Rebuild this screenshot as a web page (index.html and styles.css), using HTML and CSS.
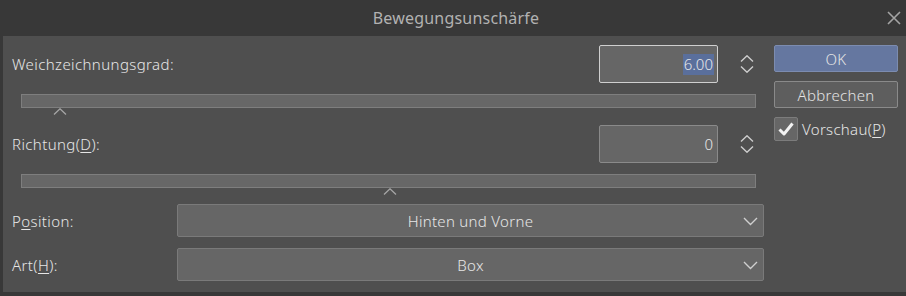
FILE: index.html
```html
<!DOCTYPE html>
<html lang="de">
<head>
<meta charset="utf-8">
<title>Bewegungsunschärfe</title>
<link rel="stylesheet" href="styles.css">
</head>
<body>
<div class="dialog">
  <header class="titlebar">
    <span class="title">Bewegungsunschärfe</span>
    <svg class="close" width="14" height="14" viewBox="0 0 14 14"><path d="M1 1 L13 13 M13 1 L1 13" stroke="#a4a4a4" stroke-width="1.6" fill="none"/></svg>
  </header>
  <main class="panel">
    <section class="form">
      <div class="row">
        <span class="label">Weichzeichnungsgrad:</span>
        <div class="numbox focused"><span class="sel">6.00</span></div>
        <div class="spin">
          <svg width="14" height="18" viewBox="0 0 14 18"><path d="M1 6.5 L7 0.8 L13 6.5 M1 11.5 L7 17.2 L13 11.5" stroke="#cfcfcf" stroke-width="1.4" fill="none"/></svg>
        </div>
      </div>
      <div class="slider"><span class="caret" style="left:31px"><svg width="14" height="7" viewBox="0 0 14 7"><path d="M1 6.5 L7 0.8 L13 6.5" stroke="#a6a6a6" stroke-width="1.3" fill="none"/></svg></span></div>
      <div class="row row2">
        <span class="label">Richtung(<u>D</u>):</span>
        <div class="numbox"><span>0</span></div>
        <div class="spin">
          <svg width="14" height="18" viewBox="0 0 14 18"><path d="M1 6.5 L7 0.8 L13 6.5 M1 11.5 L7 17.2 L13 11.5" stroke="#cfcfcf" stroke-width="1.4" fill="none"/></svg>
        </div>
      </div>
      <div class="slider"><span class="caret" style="left:361px"><svg width="14" height="7" viewBox="0 0 14 7"><path d="M1 6.5 L7 0.8 L13 6.5" stroke="#a6a6a6" stroke-width="1.3" fill="none"/></svg></span></div>
      <div class="selrow first">
        <span class="label">P<u>o</u>sition:</span>
        <div class="select"><span>Hinten und Vorne</span>
          <svg class="chev" width="15" height="9" viewBox="0 0 15 9"><path d="M1 1 L7.5 7.5 L14 1" stroke="#cfcfcf" stroke-width="1.4" fill="none"/></svg>
        </div>
      </div>
      <div class="selrow">
        <span class="label">Art(<u>H</u>):</span>
        <div class="select"><span>Box</span>
          <svg class="chev" width="15" height="9" viewBox="0 0 15 9"><path d="M1 1 L7.5 7.5 L14 1" stroke="#cfcfcf" stroke-width="1.4" fill="none"/></svg>
        </div>
      </div>
    </section>
    <aside class="side">
      <button class="btn ok">OK</button>
      <button class="btn">Abbrechen</button>
      <label class="check">
        <span class="box"><svg width="18" height="16" viewBox="0 0 18 16"><path d="M2.5 8.5 L7 13 L15.5 2.5" stroke="#f2f2f2" stroke-width="3" fill="none" stroke-linejoin="round"/></svg></span>
        <span>Vorschau(<u>P</u>)</span>
      </label>
    </aside>
  </main>
  <div class="bottom"></div>
</div>
</body>
</html>
```
FILE: styles.css
```css
* { box-sizing: border-box; }
html, body { margin: 0; padding: 0; }
body {
  background: #383838;
  font-family: "Noto Sans", "Noto Sans CJK JP", sans-serif;
  font-weight: 300;
  color: #e4e4e4;
  width: 906px;
  height: 296px;
  overflow: hidden;
}
.dialog { display: flex; flex-direction: column; height: 296px; }
.titlebar {
  height: 36px;
  display: flex;
  align-items: center;
  justify-content: center;
  position: relative;
  background: #383838;
}
.title { font-size: 16px; font-weight: 400; color: #b2b2b2; letter-spacing: 0.2px; margin-left: 6px; }
.close { position: absolute; right: 5px; top: 11px; }
.panel {
  height: 256px;
  margin-left: 3px;
  background: #4f4f4f;
  display: flex;
  padding: 9px 0 0 9px;
}
.form { width: 752px; display: flex; flex-direction: column; }
.label { font-size: 15px; color: #e6e6e6; letter-spacing: 0.4px; }
.label u, .check u { text-underline-offset: 2px; }
.row { height: 38px; display: flex; align-items: center; }
.row .label { flex: 1; }
.row2 { margin-top: 17px; }
.numbox {
  width: 119px;
  height: 38px;
  background: #666666;
  border: 1px solid #8a8a8a;
  border-radius: 2px;
  display: flex;
  align-items: center;
  justify-content: flex-end;
  padding-right: 3px;
  font-size: 15px;
  color: #e8e8e8;
}
.numbox.focused { border-color: #cfcfcf; }
.numbox span { padding: 2px 1px; line-height: 17px; }
.numbox .sel { background: #5a6f9c; }
.spin { width: 46px; display: flex; justify-content: flex-end; padding-right: 10px; }
.slider {
  position: relative;
  margin: 11px 0 0 9px;
  width: 735px;
  height: 14px;
  background: #676767;
  border: 1px solid #7e7e7e;
}
.caret { position: absolute; top: 13px; line-height: 0; }
.selrow { display: flex; align-items: center; height: 33px; margin-top: 11px; }
.selrow.first { margin-top: 16px; }
.selrow .label { width: 165px; }
.select {
  width: 587px;
  height: 33px;
  background: #666666;
  border: 1px solid #7a7a7a;
  border-radius: 2px;
  display: flex;
  align-items: center;
  justify-content: center;
  position: relative;
  font-size: 15px;
  letter-spacing: 0.3px;
  color: #e6e6e6;
}
.chev { position: absolute; right: 5px; top: 12px; }
.side {
  margin-left: 10px;
  width: 124px;
  display: flex;
  flex-direction: column;
}
.btn {
  height: 27px;
  width: 124px;
  font-family: inherit;
  font-weight: 300;
  font-size: 15px;
  letter-spacing: 0.3px;
  color: #e4e4e4;
  background: #5e5e5e;
  border: 1px solid #8a8a8a;
  border-radius: 2px;
  padding: 0;
  margin-bottom: 9px;
}
.btn.ok { background: #6577a0; border-color: #7c8cb0; }
.check { display: flex; align-items: center; gap: 4px; font-size: 15px; letter-spacing: 0.3px; color: #e6e6e6; }
.box {
  width: 24px;
  height: 24px;
  background: #666666;
  border: 1px solid #7c7c7c;
  border-radius: 2px;
  display: flex;
  align-items: center;
  justify-content: center;
}
.bottom { flex: 1; }
```
